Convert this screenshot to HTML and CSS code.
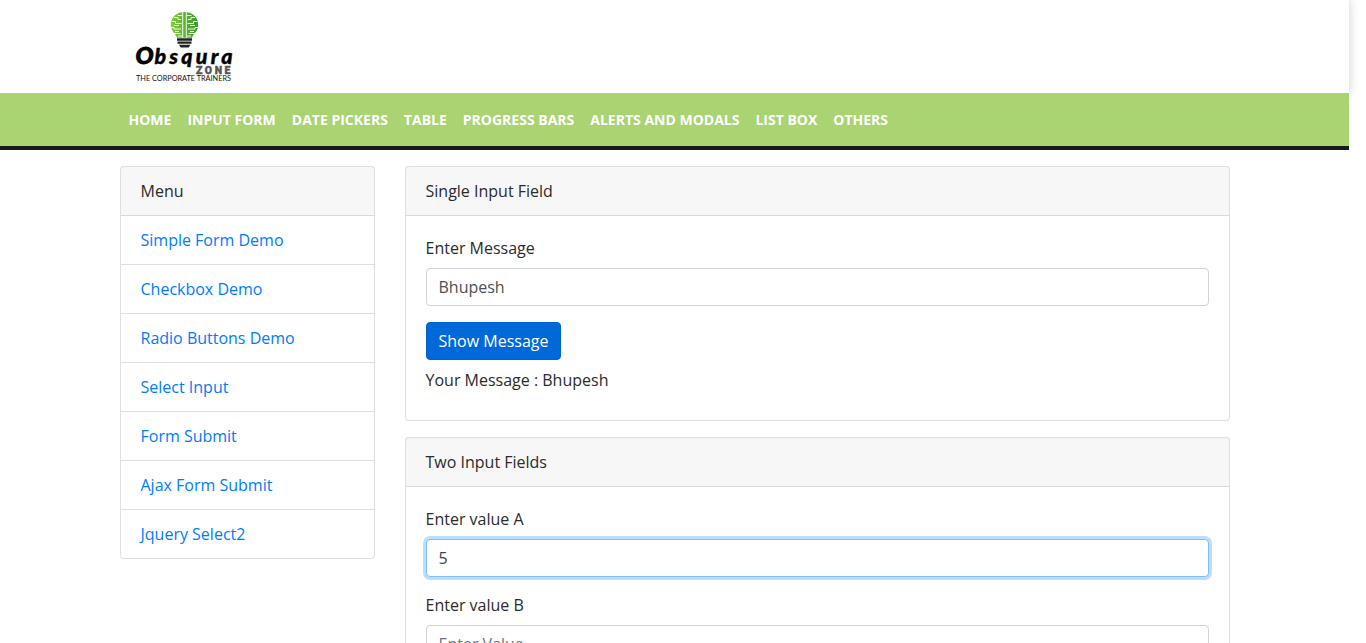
FILE: index.html
```html
<!DOCTYPE html>
<html lang="en">
<head>
<meta charset="utf-8">
<title>Obsqura Zone</title>
<link rel="stylesheet" href="styles.css">
</head>
<body>
<div class="page">
  <header class="top">
    <div class="container">
      <a class="brand">
        <svg class="logo" width="112" height="77" viewBox="0 0 112 77" role="img" aria-label="Obsqura Zone">
          <defs>
            <linearGradient id="bulb" x1="0" x2="1"><stop offset="0" stop-color="#83cc3c"/><stop offset="1" stop-color="#3a9a2f"/></linearGradient>
          </defs>
          <path fill="url(#bulb)" d="M56.500 4C48 4 42.800 9.500 42.800 17c0 6.500 4.700 8 6.200 12.800h15c1.500-4.800 6.200-6.300 6.200-12.800C70.200 9.500 65 4 56.500 4z"/>
          <g fill="none" stroke="#f1f9e8" stroke-width="1">
            <path d="M54.700 4v26M58.300 4v26"/>
            <path d="M54.500 7.500h-5M46 9.500h4v2h3M43.500 13.500h4v2h6M46 17.500h5M42.500 19.500h3.500v1.500h7M47 23.500h4M45.500 25.500h7M50 28h4"/>
            <path d="M58.500 7.500h5M67 9.500h-4v2h-3M69.500 13.500h-4v2h-6M67 17.500h-5M70.500 19.500h-3.500v1.500h-7M66 23.500h-4M67.500 25.500h-7M63 28h-4"/>
          </g>
          <path fill="#222" d="M49 30.300h15v2.500H49zM49.500 33.600h14v2.200h-14zM51 36.700h11.500l-1.800 2.800h-8z"/>
          <text class="logo-name" y="55.700"><tspan class="logo-initial" x="7.500" textLength="18" lengthAdjust="spacingAndGlyphs">O</tspan><tspan x="26.500" textLength="78">bsqura</tspan></text>
          <text class="logo-zone" x="68" y="65.500" textLength="34.500">ZONE</text>
          <text class="logo-tag" x="8" y="73" textLength="95" lengthAdjust="spacingAndGlyphs">THE CORPORATE TRAINERS</text>
        </svg>
      </a>
    </div>
  </header>
  <nav class="nav">
    <div class="container nav-list">
      <a>HOME</a><a>INPUT FORM</a><a>DATE PICKERS</a><a>TABLE</a><a>PROGRESS BARS</a><a>ALERTS AND MODALS</a><a>LIST BOX</a><a>OTHERS</a>
    </div>
  </nav>
  <main class="container columns">
    <aside class="card">
      <div class="card-header">Menu</div>
      <ul class="menu">
        <li><a>Simple Form Demo</a></li>
        <li><a>Checkbox Demo</a></li>
        <li><a>Radio Buttons Demo</a></li>
        <li><a>Select Input</a></li>
        <li><a>Form Submit</a></li>
        <li><a>Ajax Form Submit</a></li>
        <li><a>Jquery Select2</a></li>
      </ul>
    </aside>
    <div class="content">
      <section class="card">
        <div class="card-header">Single Input Field</div>
        <div class="card-body">
          <label class="label" for="message">Enter Message</label>
          <input class="input" id="message" type="text" value="Bhupesh">
          <button class="button" type="button">Show Message</button>
          <div class="message">Your Message : Bhupesh</div>
        </div>
      </section>
      <section class="card">
        <div class="card-header">Two Input Fields</div>
        <div class="card-body">
          <label class="label" for="value-a">Enter value A</label>
          <input class="input input-active" id="value-a" type="text" value="5">
          <label class="label" for="value-b">Enter value B</label>
          <input class="input" id="value-b" type="text" placeholder="Enter Value">
        </div>
      </section>
    </div>
  </main>
</div>
</body>
</html>
```

FILE: styles.css
```css
* { box-sizing: border-box; }
html, body { height: 100%; overflow: hidden; }
body {
  margin: 0;
  background: #fff;
  color: #2b2b2b;
  font: 400 16px/24px "Open Sans", sans-serif;
}
.page { width: 1349px; }
.container { width: 1110px; margin: 0 auto; }
.top {
  height: 93px;
  padding-top: 8px;
  background: #fff;
  box-shadow: 0 0 10px rgba(0, 0, 0, .2);
}
.brand { display: block; width: 112px; margin-left: 8.500px; }
.logo { display: block; }
.logo-name { font: italic 900 21.500px Lato, sans-serif; fill: #000; stroke: #000; stroke-width: .4px; }
.logo-initial { font-size: 23px; stroke-width: .9px; }
.logo-zone { font: 900 10.500px Roboto, sans-serif; fill: #555; stroke: #555; stroke-width: .4px; }
.logo-tag { font: 400 7px Lato, sans-serif; fill: #111; }
.nav {
  position: relative;
  height: 57px;
  background: #a9d471;
  border-bottom: 4px solid #18191f;
}
.nav-list { display: flex; padding: 16px 0 0 1px; }
.nav-list a {
  padding: 0 8px;
  color: #fff;
  font-size: 14px;
  font-weight: 700;
  line-height: 21px;
  white-space: nowrap;
}
.columns {
  display: grid;
  grid-template-columns: 255px 825px;
  gap: 30px;
  align-items: start;
  padding-top: 16px;
}
.content { display: grid; gap: 16px; }
.card { border: 1px solid rgba(0, 0, 0, .125); border-radius: 4px; background: #fff; }
.card-header {
  height: 49px;
  padding: 12px 20px;
  background: rgba(0, 0, 0, .03);
  border-bottom: 1px solid rgba(0, 0, 0, .125);
}
.menu { margin: 0; padding: 0; list-style: none; }
.menu li { height: 49px; padding: 12px 20px; border-bottom: 1px solid rgba(0, 0, 0, .125); }
.menu li:last-child { height: 48px; border-bottom: 0; }
.menu a { color: #007bff; }
.card-body { padding: 20px; }
.label { display: block; margin-bottom: 8px; }
.input {
  display: block;
  width: 100%;
  height: 38px;
  margin: 0 0 16px;
  padding: 6px 12px;
  border: 1px solid #ced4da;
  border-radius: 4px;
  background: #fff;
  color: #495057;
  font: inherit;
}
.input::placeholder { color: #6c757d; opacity: 1; }
.input-active { border-color: #80bdff; color: #3f464d; box-shadow: 0 0 0 3px rgba(0, 123, 255, .25); }
.button {
  display: block;
  height: 38px;
  padding: 6px 12px;
  border: 1px solid #0062cc;
  border-radius: 4px;
  background: #0069d9;
  color: #fff;
  font: inherit;
}
.message { margin: 8px 0; }
```
